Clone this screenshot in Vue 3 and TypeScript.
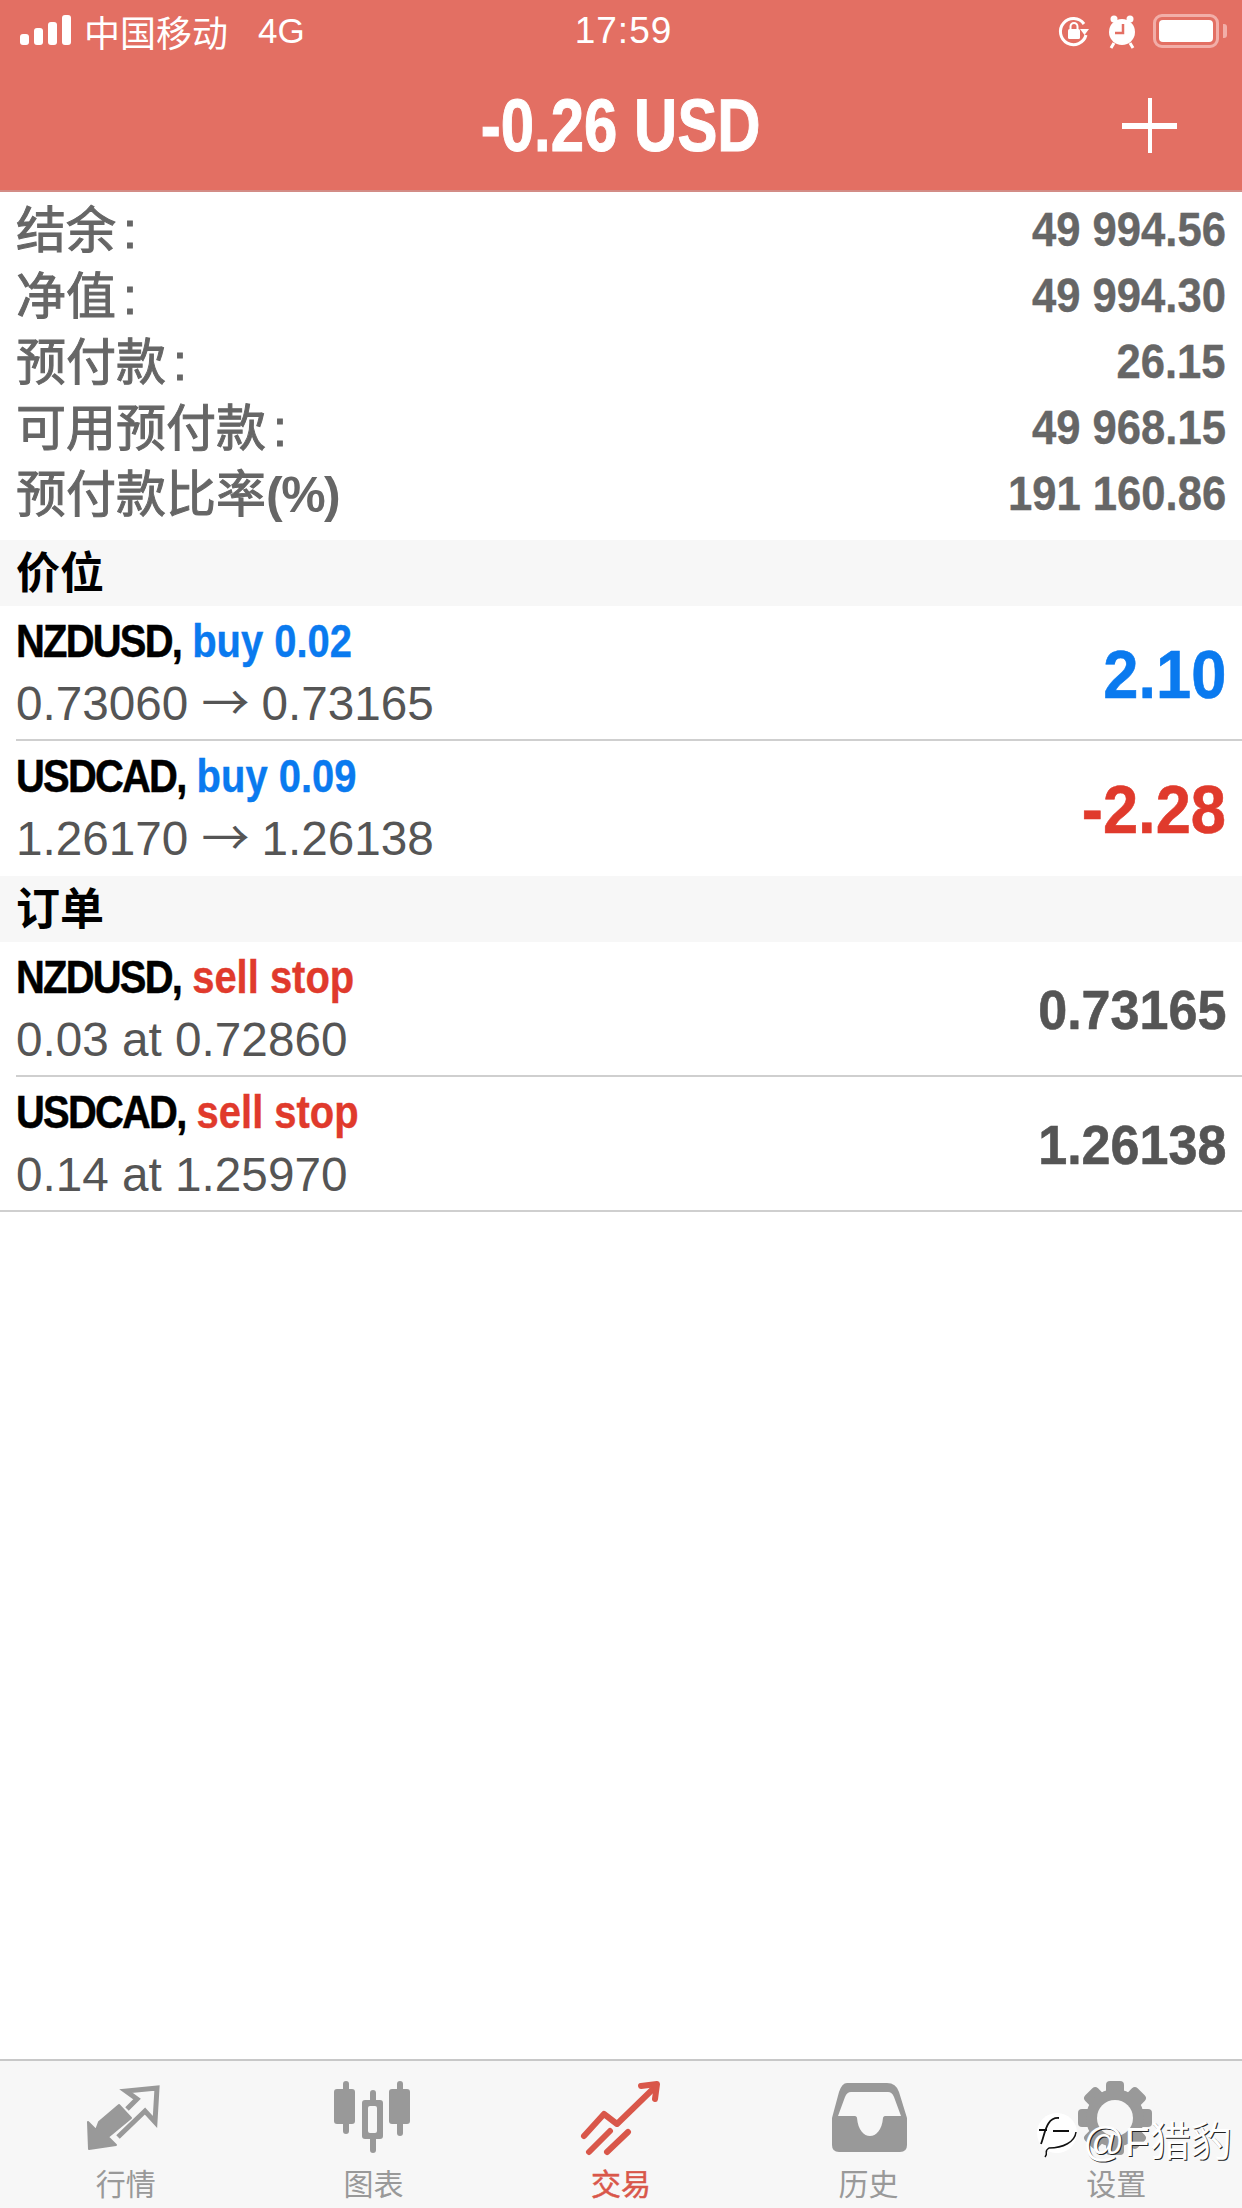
<script setup lang="ts">
interface Stat { label: string; suffix?: string; value: string }
interface Row { symbol: string; action: string; tone: string; from: string; to?: string; amount: string; amountTone: string }
interface Tab { label: string; active?: boolean }

const stats: Stat[] = [
  { label: '结余 :', value: '49 994.56' },
  { label: '净值 :', value: '49 994.30' },
  { label: '预付款 :', value: '26.15' },
  { label: '可用预付款 :', value: '49 968.15' },
  { label: '预付款比率', suffix: '(%)', value: '191 160.86' },
]
const positions: Row[] = [
  { symbol: 'NZDUSD,', action: 'buy 0.02', tone: 'blue', from: '0.73060', to: '0.73165', amount: '2.10', amountTone: 'blue' },
  { symbol: 'USDCAD,', action: 'buy 0.09', tone: 'blue', from: '1.26170', to: '1.26138', amount: '-2.28', amountTone: 'red' },
]
const orders: Row[] = [
  { symbol: 'NZDUSD,', action: 'sell stop', tone: 'red', from: '0.03 at 0.72860', amount: '0.73165', amountTone: 'grey' },
  { symbol: 'USDCAD,', action: 'sell stop', tone: 'red', from: '0.14 at 1.25970', amount: '1.26138', amountTone: 'grey' },
]
const sections = [
  { title: '价位', rows: positions, closed: false },
  { title: '订单', rows: orders, closed: true },
]
const tabs: Tab[] = [
  { label: '行情' },
  { label: '图表' },
  { label: '交易', active: true },
  { label: '历史' },
  { label: '设置' },
]
const teeth = [0, 45, 90, 135, 180, 225, 270, 315]
</script>

<template>
  <div class="screen">
    <header class="top">
      <div class="status">
        <div class="status-left">
          <svg class="signal" width="54" height="34" viewBox="0 0 54 34" fill="#fff">
            <rect x="0" y="19" width="9" height="11" rx="3" />
            <rect x="14" y="13" width="9" height="17" rx="3" />
            <rect x="28" y="7" width="9" height="23" rx="3" />
            <rect x="42" y="0" width="9" height="30" rx="3" />
          </svg>
          <span class="carrier">中国移动</span>
          <span class="net">4G</span>
        </div>
        <span class="clock">17:59</span>
        <div class="status-right">
          <svg width="34" height="34" viewBox="0 0 34 34" fill="none">
            <path d="M27 10A13 13 0 1 0 29 21" stroke="#fff" stroke-width="3" />
            <path d="M23 15l9 0-4.500 6z" fill="#fff" />
            <rect x="11" y="15" width="12" height="10" rx="1.500" fill="#fff" />
            <path d="M13.500 15v-2.500a3.500 3.500 0 0 1 7 0V15" stroke="#fff" stroke-width="2" />
          </svg>
          <svg width="30" height="36" viewBox="0 0 30 36" fill="none">
            <circle cx="15" cy="19" r="13" fill="#fff" />
            <circle cx="7" cy="6" r="3.500" fill="#fff" />
            <circle cx="23" cy="6" r="3.500" fill="#fff" />
            <path d="M7 30l-3 5M23 30l3 5" stroke="#fff" stroke-width="3" />
            <path d="M16 11v9h-8" stroke="#e36f63" stroke-width="2.500" />
          </svg>
          <div class="battery"><div class="battery-fill"></div></div>
          <div class="battery-nub"></div>
        </div>
      </div>
      <div class="bar">
        <span class="title">-0.26 USD</span>
        <div class="plus"></div>
      </div>
    </header>

    <section class="stats">
      <div v-for="s in stats" :key="s.label" class="stat">
        <span class="stat-label">{{ s.label }}<span v-if="s.suffix" class="stat-suffix">{{ s.suffix }}</span></span>
        <span class="stat-value">{{ s.value }}</span>
      </div>
    </section>

    <section v-for="sec in sections" :key="sec.title">
      <div class="sec-title">{{ sec.title }}</div>
      <div v-for="r in sec.rows" :key="r.symbol" class="row">
        <div class="row-left">
          <div class="row-head"><span class="sym">{{ r.symbol }}</span> <span :class="['act', r.tone]">{{ r.action }}</span></div>
          <div class="row-sub">{{ r.from }}<template v-if="r.to"><span class="arrow">→</span>{{ r.to }}</template></div>
        </div>
        <span :class="['amount', r.amountTone]">{{ r.amount }}</span>
      </div>
      <div v-if="sec.closed" class="rule"></div>
    </section>

    <div class="spacer"></div>

    <nav class="tabs">
      <div v-for="(t, i) in tabs" :key="t.label" :class="['tab', { active: t.active }]">
        <svg class="tab-icon" width="90" height="76" viewBox="0 0 90 76">
          <g v-if="i === 0">
            <path d="M7 42L8 69L35 65L27 57L50 38L38 25L18 42L15 50Z" fill="#999" stroke="#999" stroke-width="2" stroke-linejoin="round" />
            <path d="M46 29L56 19L45 11L76 8L74 42L64 31L37 57" fill="none" stroke="#999" stroke-width="5" />
          </g>
          <g v-else-if="i === 1" fill="#999">
            <rect x="15" y="1" width="6" height="53" rx="3" />
            <rect x="6" y="9" width="21" height="35" rx="3" />
            <rect x="42" y="10" width="6" height="63" rx="3" />
            <rect x="34" y="20" width="21" height="39" rx="3" />
            <rect x="40" y="26" width="9" height="27" rx="2" fill="#f7f7f7" />
            <rect x="69" y="1" width="6" height="55" rx="3" />
            <rect x="61" y="9" width="21" height="35" rx="3" />
          </g>
          <g v-else-if="i === 2" fill="none" stroke="#d9574a" stroke-width="6" stroke-linecap="round" stroke-linejoin="round">
            <path d="M8 56L28 34L41 44L77 9" />
            <path d="M65 6L81 4L79 19" />
            <path d="M13 72L34 51M31 72L52 52" />
          </g>
          <g v-else-if="i === 3">
            <path fill-rule="evenodd" fill="#999" d="M23 3H63Q72 3 75 12L83 38V65Q83 72 76 72H15Q8 72 8 65V38L15 12Q18 3 23 3ZM27 12Q23 12 21 17L14 36H31C32 36 33 37 33 38C34 50 40 56 46 56C52 56 58 50 59 38C59 37 60 36 61 36H77L70 17Q68 12 64 12Z" />
          </g>
          <g v-else>
            <g transform="translate(44 38)" fill="#999">
              <rect v-for="a in teeth" :key="a" x="-9" y="-37" width="18" height="16" rx="4" :transform="`rotate(${a})`" />
              <circle r="29" />
              <circle r="18" fill="#f7f7f7" />
            </g>
          </g>
        </svg>
        <span class="tab-label">{{ t.label }}</span>
      </div>
    </nav>

    <div class="watermark">
      <svg width="44" height="52" viewBox="0 0 44 52" fill="none">
        <circle cx="22" cy="21" r="20" fill="#fff" />
        <path d="M10 45C14 40 8 40 14 36C28 36 40 30 41 20" stroke="#111" stroke-width="1.500" />
        <path d="M6 32C10 22 11 5 24 6M4 18H12M18 19H34" stroke="#111" stroke-width="1.800" />
      </svg>
      <span>@F猎豹</span>
    </div>
  </div>
</template>

<style scoped>
.screen {
  position: relative;
  width: 1242px;
  height: 2208px;
  display: flex;
  flex-direction: column;
  background: #fff;
  overflow: hidden;
  font-family: "Liberation Sans", "Noto Sans CJK SC", sans-serif;
}
.top {
  height: 190px;
  flex: none;
  background: #e36f63;
  border-bottom: 2px solid #d38c86;
  box-sizing: content-box;
  color: #fff;
  display: flex;
  flex-direction: column;
}
.status {
  height: 62px;
  display: grid;
  grid-template-columns: 1fr auto 1fr;
  align-items: center;
  padding: 0 15px 0 20px;
}
.status-left { display: flex; align-items: center; }
.signal { margin-top: 2px; }
.carrier { font-size: 36px; margin-left: 10px; }
.net { font-size: 35px; margin-left: 30px; }
.clock { font-size: 37px; letter-spacing: 1px; }
.status-right { display: flex; align-items: center; justify-content: flex-end; gap: 16px; }
.battery {
  width: 66px;
  height: 34px;
  box-sizing: border-box;
  border: 3px solid #f2aea8;
  border-radius: 9px;
  padding: 3px;
}
.battery-fill { width: 100%; height: 100%; background: #fff; border-radius: 4px; }
.battery-nub { width: 4px; height: 14px; background: #f2aea8; border-radius: 0 3px 3px 0; margin-left: -12px; }
.bar { flex: 1; display: flex; align-items: center; justify-content: center; position: relative; padding-bottom: 2px; }
.title {
  display: inline-block;
  font-size: 74px;
  font-weight: 700;
  -webkit-text-stroke: 1px #fff;
  transform: scaleX(0.81);
}
.plus {
  position: absolute;
  left: 1122px;
  top: 36px;
  width: 55px;
  height: 55px;
  background:
    linear-gradient(#fff, #fff) center / 55px 6px no-repeat,
    linear-gradient(#fff, #fff) center / 4px 55px no-repeat;
}
.stats { padding: 4px 0 14px; flex: none; }
.stat {
  height: 66px;
  padding: 0 16px;
  display: flex;
  justify-content: space-between;
  align-items: center;
  color: #666;
}
.stat-label { font-size: 50px; font-weight: 400; word-spacing: -7px; -webkit-text-stroke: 1px #666; margin-top: -7px; }
.stat-suffix { font-weight: 700; letter-spacing: -1.500px; -webkit-text-stroke: 0; }
.stat-value {
  display: inline-block;
  font-size: 49px;
  font-weight: 700;
  -webkit-text-stroke: 0.4px #666;
  transform: scaleX(0.89);
  transform-origin: right center;
}
.sec-title {
  height: 66px;
  padding-left: 16px;
  background: #f7f7f7;
  color: #000;
  font-size: 44px;
  font-weight: 700;
  line-height: 68px;
}
.row {
  margin-left: 16px;
  height: 135px;
  box-sizing: border-box;
  border-bottom: 2px solid #cfcfcf;
  padding: 0 16px 0 0;
  display: flex;
  justify-content: space-between;
  align-items: center;
}
.row:last-of-type { border-bottom-color: transparent; }
.rule { height: 2px; margin-top: -2px; background: #cfcfcf; }
.row-left { display: flex; flex-direction: column; }
.row-head {
  height: 64px;
  line-height: 64px;
  font-size: 47px;
  font-weight: 700;
  white-space: nowrap;
  color: #000;
  transform: scaleX(0.85);
  transform-origin: left center;
}
.sym { letter-spacing: -2.100px; -webkit-text-stroke: 0.5px #000; }
.act { -webkit-text-stroke: 0.4px currentColor; }
.row-sub { height: 64px; line-height: 62px; font-size: 47.700px; color: #555; white-space: nowrap; }
.arrow { font-family: "Noto Sans CJK SC", sans-serif; font-size: 48px; line-height: 0; margin: 0 12px 0 13px; }
.amount {
  display: inline-block;
  font-size: 68px;
  font-weight: 700;
  margin-top: 2px;
  -webkit-text-stroke: 0.6px currentColor;
  transform: scaleX(0.93);
  transform-origin: right center;
}
.amount.grey { font-size: 56px; color: #555; }
.blue { color: #0a7aef; }
.red { color: #e03a2c; }
.spacer { flex: 1; }
.tabs {
  flex: none;
  height: 147px;
  border-top: 2px solid #c8c8c8;
  background: #f7f7f7;
  display: grid;
  grid-template-columns: repeat(5, 1fr);
  padding: 0 2px;
}
.tab { display: flex; flex-direction: column; align-items: center; color: #999; padding-top: 19px; }
.tab.active { color: #d9574a; -webkit-text-stroke: 0.5px #d9574a; }
.tab-label { font-size: 30px; line-height: 44px; margin-top: 7px; }
.watermark {
  position: absolute;
  left: 1035px;
  top: 2108px;
  display: flex;
  align-items: center;
  gap: 4px;
  font-size: 41px;
  color: #fff;
  text-shadow: 1px 1px 0 #222;
  white-space: nowrap;
}
</style>
